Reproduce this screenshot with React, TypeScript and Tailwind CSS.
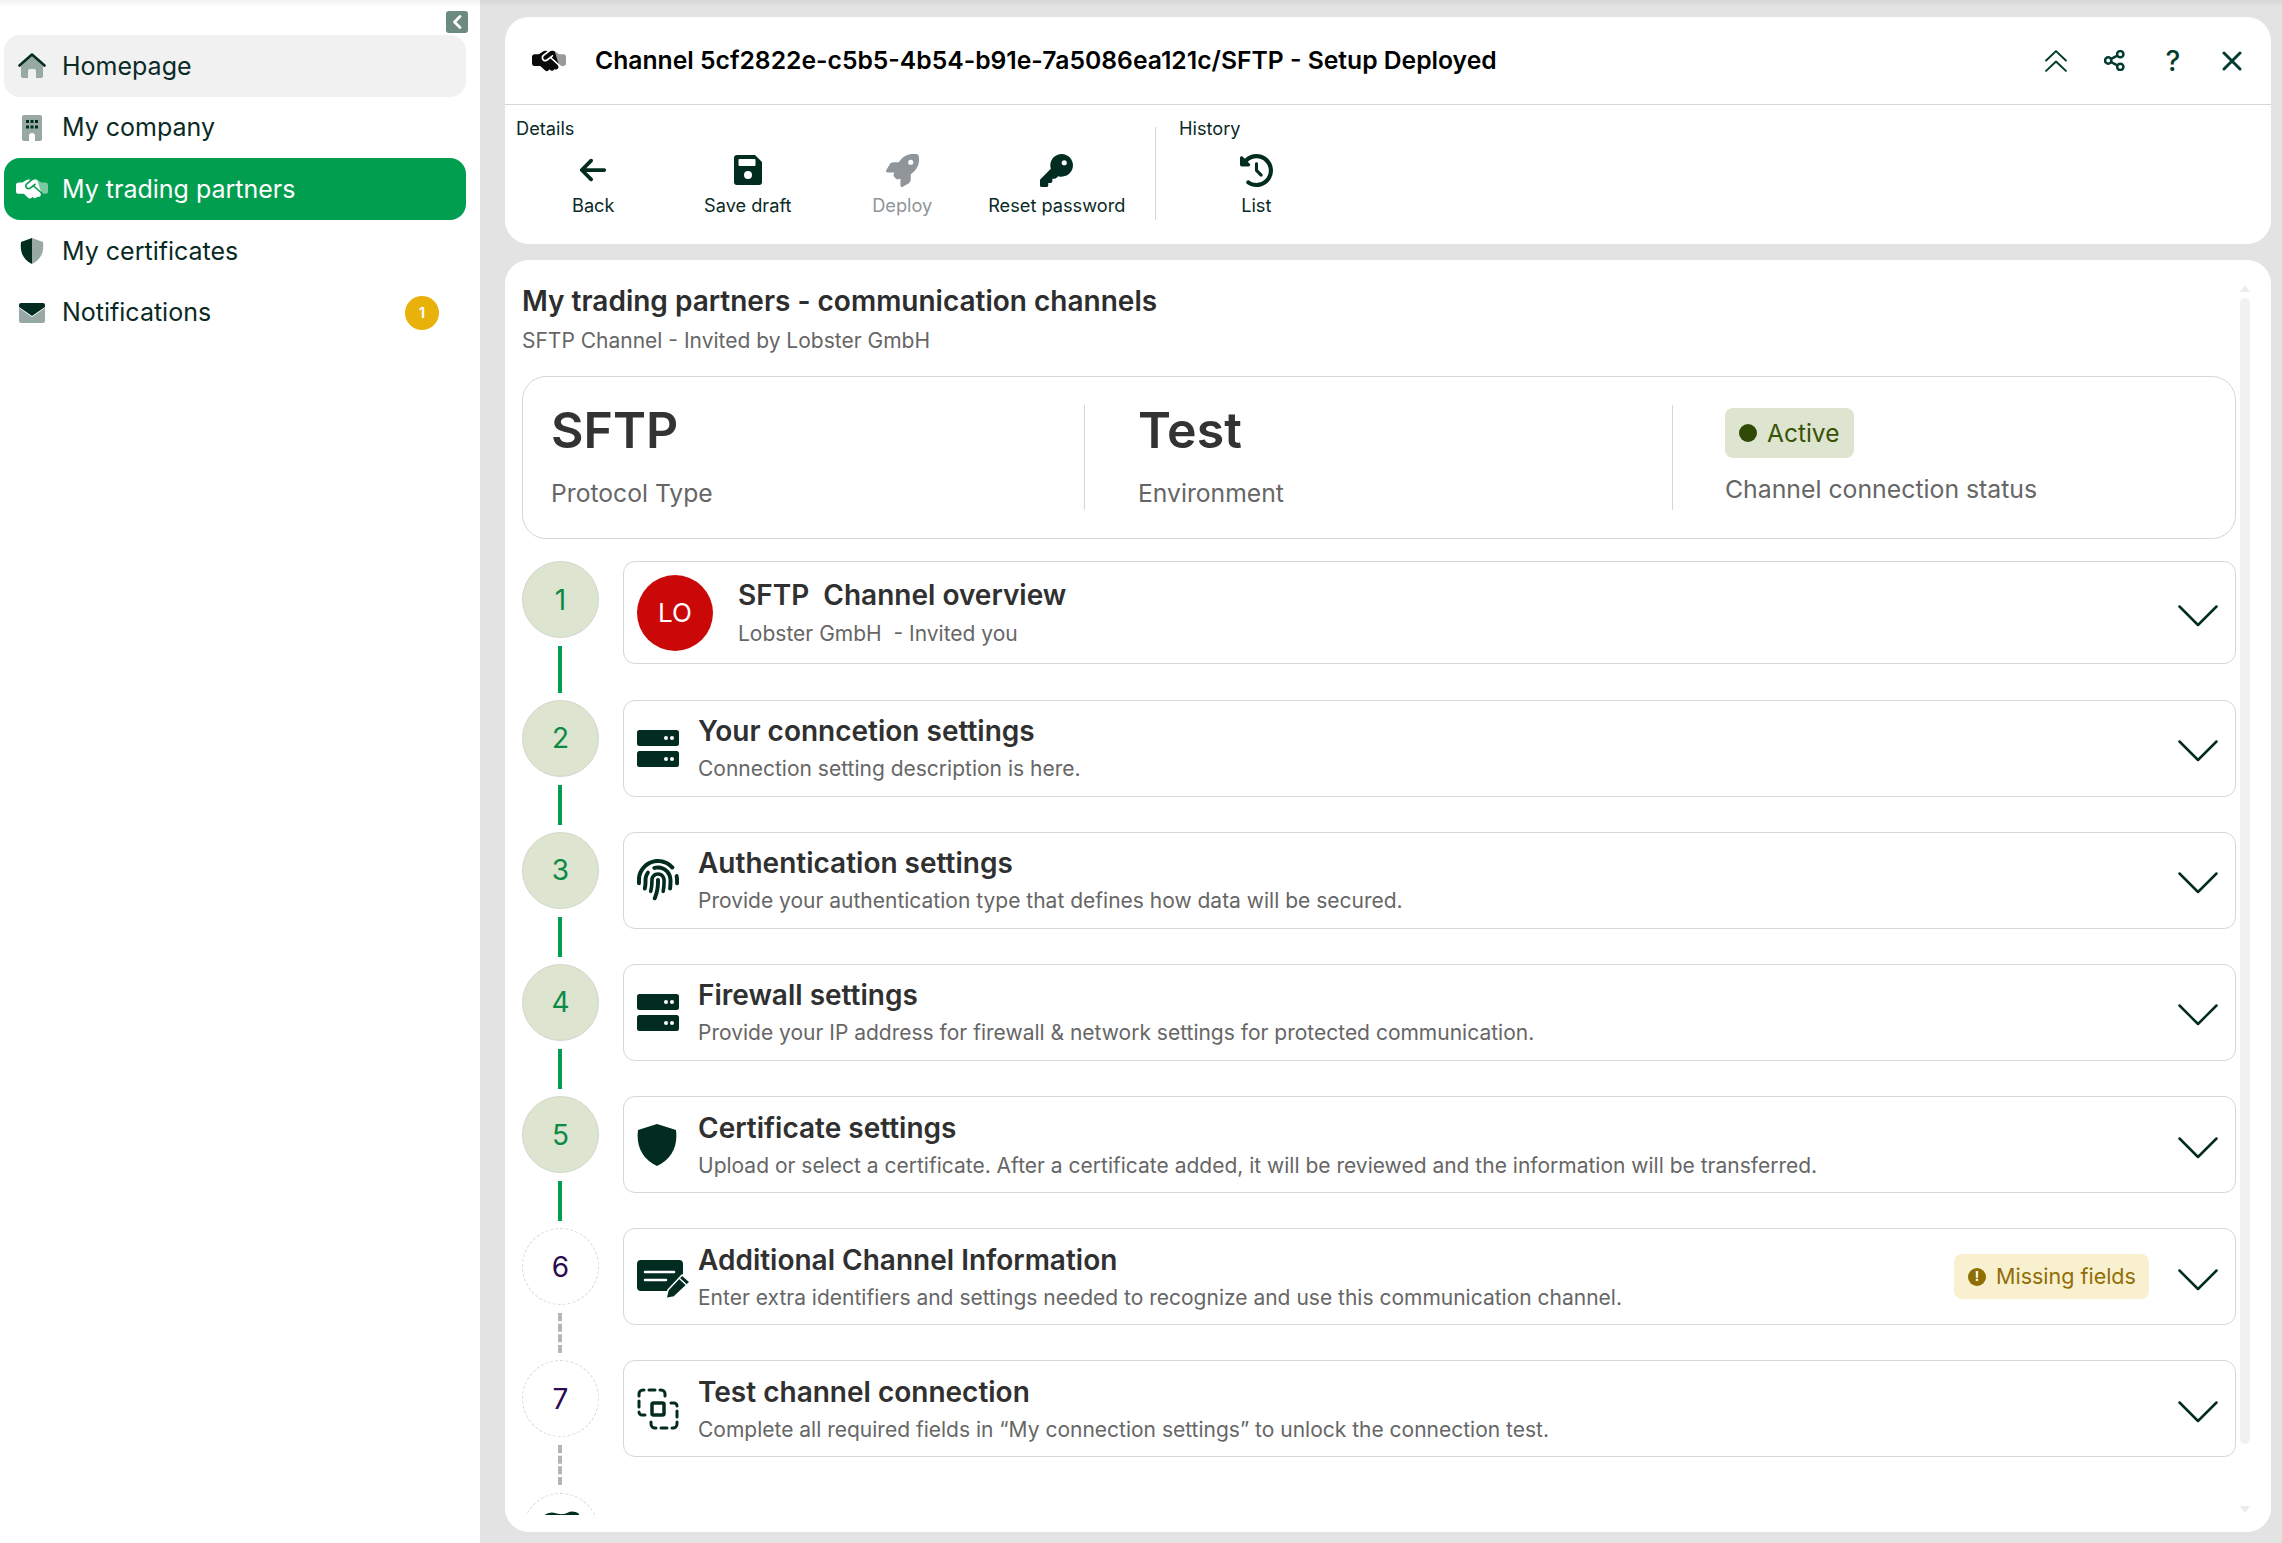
import React from "react";
import { FaHandshakeSimple, FaRocket, FaKey, FaClockRotateLeft, FaFingerprint, FaArrowLeft } from "react-icons/fa6";

const Dark = "#032c21";

function House() {
  return (
    <svg viewBox="0 0 28 26" className="w-[28px] h-[26px]">
      <path d="M3 13 14 3l11 10v10a2 2 0 0 1-2 2h-5v-7a2 2 0 0 0-2-2h-4a2 2 0 0 0-2 2v7H5a2 2 0 0 1-2-2z" fill="#98a8a4" />
      <path d="M1.500 12.500 14 1.500l12.500 11" fill="none" stroke={Dark} strokeWidth="2.600" strokeLinecap="round" strokeLinejoin="round" />
    </svg>
  );
}

function Building() {
  return (
    <svg viewBox="0 0 20 26" className="w-[20px] h-[26px]">
      <path d="M2 0h16a2 2 0 0 1 2 2v22a2 2 0 0 1-2 2h-5v-5a3 3 0 0 0-6 0v5H2a2 2 0 0 1-2-2V2a2 2 0 0 1 2-2z" fill="#98a8a4" />
      <path d="M4 5h3v3H4zM8.500 5h3v3h-3zM13 5h3v3h-3zM4 10.500h3v3H4zM8.500 10.500h3v3h-3zM13 10.500h3v3h-3z" fill={Dark} />
    </svg>
  );
}

function ShieldDuo() {
  return (
    <svg viewBox="0 0 24 26" className="w-[24px] h-[26px]">
      <path d="M12 0 23 4c1 9-1 17-11 22z" fill="#98a8a4" />
      <path d="M12 0 1 4c-1 9 1 17 11 22z" fill={Dark} />
    </svg>
  );
}

function EnvelopeDuo() {
  return (
    <svg viewBox="0 0 26 20" className="w-[26px] h-[20px]">
      <path d="M0 5v13a2 2 0 0 0 2 2h22a2 2 0 0 0 2-2V5l-13 9z" fill="#98a8a4" />
      <path d="M2 0h22a2 2 0 0 1 2 2v2L13 13 0 4V2a2 2 0 0 1 2-2z" fill={Dark} />
    </svg>
  );
}

function ShakeDuo({ left, right, size }: { left: string; right: string; size: number }) {
  return (
    <span className="relative block shrink-0" style={{ width: size, height: size }}>
      <FaHandshakeSimple size={size} color={right} className="absolute inset-0 [clip-path:inset(0_0_0_55%)]" />
      <FaHandshakeSimple size={size} color={left} className="absolute inset-0 [clip-path:polygon(0_0,60%_0,90%_100%,0_100%)]" />
    </span>
  );
}

function Floppy() {
  return (
    <svg viewBox="0 0 28 30" className="w-[28px] h-[30px]">
      <path d="M3 0h18l7 7v20a3 3 0 0 1-3 3H3a3 3 0 0 1-3-3V3a3 3 0 0 1 3-3z" fill={Dark} />
      <rect x="4.500" y="4" width="17" height="7" rx="1" fill="#fff" />
      <circle cx="14" cy="20" r="4" fill="#fff" />
    </svg>
  );
}

function Server() {
  return (
    <svg viewBox="0 0 42 37" className="w-[42px] h-[37px] shrink-0">
      <rect x="0" y="0" width="42" height="16" rx="2.500" fill={Dark} />
      <rect x="0" y="21" width="42" height="16" rx="2.500" fill={Dark} />
      <circle cx="29" cy="8" r="2" fill="#fff" />
      <circle cx="35" cy="8" r="2" fill="#fff" />
      <circle cx="29" cy="29" r="2" fill="#fff" />
      <circle cx="35" cy="29" r="2" fill="#fff" />
    </svg>
  );
}

function Shield() {
  return (
    <svg viewBox="0 0 40 42" className="w-[40px] h-[42px] shrink-0">
      <path d="M20 0 39 6c2 16-4 29-19 36C5 35-1 22 1 6z" fill={Dark} />
    </svg>
  );
}

function NotePen() {
  return (
    <svg viewBox="0 0 53 38" className="w-[53px] h-[38px] shrink-0 max-w-none mt-[4px]">
      <path d="M4 0h38a4 4 0 0 1 4 4v10L31 31H4a4 4 0 0 1-4-4V4a4 4 0 0 1 4-4z" fill={Dark} />
      <path d="M8 12h29M8 20h21" stroke="#fff" strokeWidth="2.500" strokeLinecap="round" />
      <path d="M45 15 53 22 37 37l-8 1.500L31 30z" fill={Dark} stroke="#fff" strokeWidth="1.500" strokeLinejoin="round" />
      <path d="M42.500 18.500 49.500 25" stroke="#fff" strokeWidth="1.500" />
    </svg>
  );
}

function DashedFocus() {
  const corner = "M2 8V6a4 4 0 0 1 4-4h1M12 2h6M23 2h1a4 4 0 0 1 4 4v2M2 13v6M2 24v0a3 3 0 0 0 3 3h3";
  return (
    <svg viewBox="0 0 42 42" className="w-[42px] h-[42px] shrink-0" fill="none" stroke={Dark} strokeWidth="3" strokeLinecap="round" strokeLinejoin="round">
      <path d={corner} />
      <path d={corner} transform="rotate(180 21 21)" />
      <rect x="15" y="15" width="12" height="12" rx="1.500" strokeWidth="3.500" />
    </svg>
  );
}

function Chevron() {
  return (
    <svg viewBox="0 0 40 22" className="w-[40px] h-[22px] shrink-0 mt-[6px]">
      <path d="M1.500 1.500 20 20 38.500 1.500" fill="none" stroke={Dark} strokeWidth="2.500" strokeLinecap="round" strokeLinejoin="round" />
    </svg>
  );
}

function NavItem({ icon, label, rowClass, badge }: { icon: React.ReactNode; label: string; rowClass: string; badge?: string }) {
  return (
    <div className={rowClass}>
      <span className="w-[59px] flex justify-center pr-[3px] shrink-0">{icon}</span>
      <span className="-ml-px text-[25px] leading-none">{label}</span>
      {badge && (
        <span className="ml-auto mr-[27px] w-[34px] h-[34px] rounded-full bg-[#e8b20a] text-white text-[14px] font-bold flex items-center justify-center">
          {badge}
        </span>
      )}
    </div>
  );
}

function Tool({ icon, label, disabled }: { icon: React.ReactNode; label: string; disabled?: boolean }) {
  return (
    <div className="w-[154.500px] flex flex-col items-center shrink-0">
      <div className="h-[34px] flex items-center justify-center">{icon}</div>
      <div className={disabled ? "mt-[6px] text-[18.200px] leading-[24px] text-[#8f9598]" : "mt-[6px] text-[18.200px] leading-[24px] text-[#0a2a26]"}>{label}</div>
    </div>
  );
}

type Step = {
  n: string;
  done: boolean;
  icon: React.ReactNode;
  title: string;
  desc: string;
  missing?: boolean;
};

const steps: Step[] = [
  { n: "2", done: true, icon: <Server />, title: "Your conncetion settings", desc: "Connection setting description is here." },
  { n: "3", done: true, icon: <FaFingerprint size={42} color={Dark} />, title: "Authentication settings", desc: "Provide your authentication type that defines how data will be secured." },
  { n: "4", done: true, icon: <Server />, title: "Firewall settings", desc: "Provide your IP address for firewall & network settings for protected communication." },
  { n: "5", done: true, icon: <Shield />, title: "Certificate settings", desc: "Upload or select a certificate. After a certificate added, it will be reviewed and the information will be transferred." },
  { n: "6", done: false, icon: <NotePen />, title: "Additional Channel Information", desc: "Enter extra identifiers and settings needed to recognize and use this communication channel.", missing: true },
  { n: "7", done: false, icon: <DashedFocus />, title: "Test channel connection", desc: "Complete all required fields in \u201cMy connection settings\u201d to unlock the connection test." },
];

function StepCircle({ n, done }: { n: string; done: boolean }) {
  return (
    <div
      className={
        done
          ? "w-[77px] h-[77px] rounded-full bg-[#dde4cf] border border-[#d2d6ca] flex items-center justify-center text-[28px] text-[#0a8a45] shrink-0"
          : "w-[77px] h-[77px] rounded-full bg-white border border-dashed border-[#d8d8d8] flex items-center justify-center text-[28px] text-[#2c0a4d] shrink-0"
      }
    >
      {n}
    </div>
  );
}

function Connector({ done, tall }: { done: boolean; tall?: boolean }) {
  if (!done) return <div className="mt-[8px] mr-[1px] h-[40px] w-0 border-l-[4px] border-dashed border-[#b5b5b5]" />;
  return <div className={tall ? "mt-[8px] mr-[1px] w-[4px] bg-[#029e50] h-[47px]" : "mt-[8px] mr-[1px] w-[4px] bg-[#029e50] h-[40px]"} />;
}

export default function App() {
  return (
    <div className="relative flex h-[1543px] w-[2282px] overflow-hidden bg-[#e3e3e3] font-['Inter','Liberation_Sans',sans-serif]">
      <div className="absolute inset-x-0 top-0 h-[7px] bg-gradient-to-b from-black/5 to-transparent" />

      <aside className="w-[480px] shrink-0 bg-white pt-[11px] pl-[4px] pr-[14px]">
        <div className="flex justify-end -mr-[2px]">
          <div className="w-[22px] h-[22px] rounded-[3px] bg-[#6c8a80] flex items-center justify-center">
            <svg viewBox="0 0 10 14" className="w-[10px] h-[14px]">
              <path d="M8 1.500 2.500 7 8 12.500" fill="none" stroke="#fff" strokeWidth="2.800" strokeLinecap="round" strokeLinejoin="round" />
            </svg>
          </div>
        </div>
        <nav className="mt-[2px] flex flex-col">
          <NavItem rowClass="h-[62px] flex items-center rounded-[16px] bg-[#f1f1f1] text-[#0a2a26]" icon={<House />} label="Homepage" />
          <NavItem rowClass="h-[61px] flex items-center text-[#0a2a26]" icon={<Building />} label="My company" />
          <NavItem rowClass="h-[62px] flex items-center rounded-[16px] bg-[#029e50] text-white" icon={<ShakeDuo left="#ffffff" right="#7ccb9f" size={32} />} label="My trading partners" />
          <NavItem rowClass="h-[62px] flex items-center text-[#0a2a26]" icon={<ShieldDuo />} label="My certificates" />
          <NavItem rowClass="h-[61px] flex items-center text-[#0a2a26]" icon={<EnvelopeDuo />} label="Notifications" badge="1" />
        </nav>
      </aside>

      <main className="flex-1 min-w-0 flex flex-col pl-[25px] pr-[11px] pt-[17px] pb-[11px] gap-[16px]">
        <section className="h-[227px] shrink-0 rounded-[24px] bg-white">
          <header className="h-[88px] border-b border-[#d6d6d6] flex items-center pl-[27px] pr-[10px]">
            <ShakeDuo left="#0a0a0a" right="#9a9a9a" size={34} />
            <h1 className="ml-[29px] text-[24.700px] font-semibold text-black leading-none">
              Channel 5cf2822e-c5b5-4b54-b91e-7a5086ea121c/SFTP - Setup Deployed
            </h1>
            <div className="ml-auto flex items-center text-[#033b2e]">
              <span className="w-[58.700px] flex justify-center">
                <svg viewBox="0 0 20 20" className="w-[22px] h-[22px]" fill="none" stroke="currentColor" strokeWidth="1.800" strokeLinecap="round" strokeLinejoin="round">
                  <path d="M1 9.500 10 1l9 8.500M1 19l9-8.500 9 8.500" />
                </svg>
              </span>
              <span className="w-[58.700px] flex justify-center">
                <svg viewBox="0 0 20 20" className="w-[21px] h-[21px]" fill="none" stroke="currentColor" strokeWidth="2.400">
                  <circle cx="15.500" cy="4" r="3" />
                  <circle cx="15.500" cy="16" r="3" />
                  <circle cx="4" cy="10" r="3" />
                  <path d="M6.800 8.500 12.800 5.400M6.800 11.500l6 3.100" />
                </svg>
              </span>
              <span className="w-[58.700px] flex justify-center text-[28px] leading-none font-medium">?</span>
              <span className="w-[58.700px] flex justify-center">
                <svg viewBox="0 0 20 20" className="w-[20px] h-[20px]" fill="none" stroke="currentColor" strokeWidth="3" strokeLinecap="round">
                  <path d="M2 2l16 16M18 2 2 18" />
                </svg>
              </span>
            </div>
          </header>
          <div className="flex pl-[11px] pt-[11px]">
            <div className="pr-[21px] shrink-0">
              <div className="text-[18.200px] leading-[24px] text-[#0a2a26]">Details</div>
              <div className="flex mt-[13px]">
                <Tool icon={<FaArrowLeft size={30} color={Dark} />} label="Back" />
                <Tool icon={<Floppy />} label="Save draft" />
                <Tool disabled icon={<FaRocket size={33} color="#8f9598" />} label="Deploy" />
                <Tool icon={<FaKey size={33} color={Dark} />} label="Reset password" />
              </div>
            </div>
            <div className="w-px h-[93px] bg-[#d6d6d6] mt-[11px]" />
            <div className="pl-[23px]">
              <div className="text-[18.200px] leading-[24px] text-[#0a2a26]">History</div>
              <div className="flex mt-[13px]">
                <Tool icon={<FaClockRotateLeft size={33} color={Dark} />} label="List" />
              </div>
            </div>
          </div>
        </section>

        <section className="relative flex-1 min-h-0 rounded-[24px] bg-white pb-[17px]">
          <div className="h-full overflow-hidden pl-[17px] pr-[35px] pt-[23px]">
            <h2 className="text-[28px] leading-[36px] font-semibold text-[#2d2d2d]">My trading partners - communication channels</h2>
            <p className="mt-[9px] text-[21px] leading-[26px] text-[#666666]">SFTP Channel - Invited by Lobster GmbH</p>

            <div className="mt-[22px] h-[163px] rounded-[24px] border border-[#d6d6d6] flex items-center">
              <div className="w-[562px] h-[105px] border-r border-[#d6d6d6] pl-[28px] shrink-0">
                <div className="text-[50px] leading-[50px] font-semibold text-[#333333]">SFTP</div>
                <div className="mt-[23px] text-[24.700px] leading-[30px] text-[#666666]">Protocol Type</div>
              </div>
              <div className="w-[588px] h-[105px] border-r border-[#d6d6d6] pl-[53px] shrink-0">
                <div className="text-[50px] leading-[50px] font-semibold text-[#333333]">Test</div>
                <div className="mt-[23px] text-[24.700px] leading-[30px] text-[#666666]">Environment</div>
              </div>
              <div className="pl-[52px] h-[105px]">
                <div className="mt-[3px] w-[129px] h-[50px] rounded-[8px] bg-[#dde4cf] flex items-center pl-[14px] gap-[10px] text-[24.500px] text-[#3a5205]">
                  <span className="w-[18px] h-[18px] rounded-full bg-[#2f4a05]" />
                  <span className="leading-none">Active</span>
                </div>
                <div className="mt-[16px] text-[24.800px] leading-[30px] text-[#666666]">Channel connection status</div>
              </div>
            </div>

            <div className="mt-[22px]">
              <div className="flex gap-[24px] h-[138.500px]">
                <div className="w-[77px] flex flex-col items-center shrink-0">
                  <StepCircle n="1" done />
                  <Connector done tall />
                </div>
                <div className="flex-1 h-[103px] rounded-[12px] border border-[#d6d6d6] flex items-center pl-[13px] pr-[17px]">
                  <div className="w-[76px] h-[76px] rounded-full bg-[#cb0808] text-white text-[26px] flex items-center justify-center shrink-0">LO</div>
                  <div className="ml-[25px] flex-1">
                    <div className="text-[28px] leading-[36px] font-semibold text-[#303030]">SFTP&nbsp; Channel overview</div>
                    <div className="mt-[7px] text-[21px] leading-[28px] text-[#666666]">Lobster GmbH&nbsp; - Invited you</div>
                  </div>
                  <Chevron />
                </div>
              </div>

              {steps.map((s) => (
                <div key={s.n} className="flex gap-[24px] h-[132.200px]">
                  <div className="w-[77px] flex flex-col items-center shrink-0">
                    <StepCircle n={s.n} done={s.done} />
                    <Connector done={s.done} />
                  </div>
                  <div className="flex-1 h-[97px] rounded-[12px] border border-[#d6d6d6] flex items-center pl-[13px] pr-[17px]">
                    <div className="w-[46px] flex justify-start items-center shrink-0">{s.icon}</div>
                    <div className="ml-[15px] flex-1 min-w-0">
                      <div className="text-[28px] leading-[36px] font-semibold text-[#303030]">{s.title}</div>
                      <div className="mt-[6px] text-[21px] leading-[28px] text-[#666666]">{s.desc}</div>
                    </div>
                    {s.missing && (
                      <div className="mr-[29px] w-[195px] h-[45px] rounded-[8px] bg-[#f9f0cf] flex items-center pl-[14px] gap-[10px] text-[21.500px] text-[#8f6e05] shrink-0">
                        <span className="w-[18px] h-[18px] rounded-full bg-[#8f6e05] text-white text-[13px] font-bold flex items-center justify-center">!</span>
                        <span className="leading-none">Missing fields</span>
                      </div>
                    )}
                    <Chevron />
                  </div>
                </div>
              ))}

              <div className="flex gap-[24px] h-[77px]">
                <div className="relative w-[77px] h-[77px] rounded-full border border-dashed border-[#d8d8d8] shrink-0">
                  <svg viewBox="0 0 36 6" className="absolute left-[19px] top-[17px] w-[38px] h-[6px]">
                    <path d="M0 5c6-4 9-4 12-3s8 2 12 0 8-2 12 1v3H0z" fill={Dark} />
                  </svg>
                </div>
              </div>
            </div>
          </div>

          <div className="absolute right-[21px] top-[25px] bottom-[19px] w-[10px] flex flex-col items-center">
            <div className="w-0 h-0 border-x-[5px] border-x-transparent border-b-[7px] border-b-[#ececec]" />
            <div className="mt-[6px] w-[10px] h-[1146px] rounded-full bg-[#f1f1f1]" />
            <div className="mt-auto w-0 h-0 border-x-[5px] border-x-transparent border-t-[7px] border-t-[#ececec]" />
          </div>
        </section>
      </main>
    </div>
  );
}
